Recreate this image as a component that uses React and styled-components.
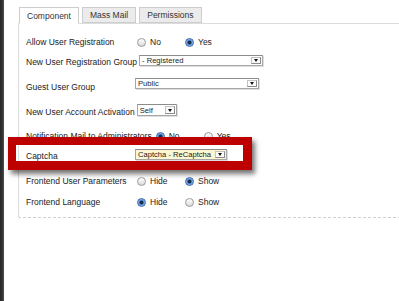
import React from 'react'
import styled, { createGlobalStyle } from 'styled-components'

const GlobalStyle = createGlobalStyle`
  html, body {
    margin: 0;
    padding: 0;
    background: #fff;
    overflow: hidden;
  }
  body {
    font-family: "Liberation Sans", Arial, sans-serif;
  }
`

const Page = styled.div`
  display: flex;
  width: 399px;
  height: 301px;
  overflow: hidden;
`

const SideStrip = styled.div`
  flex: 0 0 4px;
  background: linear-gradient(to right, #262626, #383838 70%, #555);
`

const Main = styled.div`
  flex: 1;
  min-width: 0;
  padding: 7px 0 0 14px;
  overflow: hidden;
`

const Tabs = styled.div`
  position: relative;
  z-index: 1;
  display: flex;
  align-items: flex-end;
  gap: 3px;
  height: 16px;
  padding-left: 1px;
`

const Tab = styled.div`
  box-sizing: border-box;
  display: flex;
  align-items: center;
  height: ${p => (p.$active ? '17px' : '16px')};
  margin-bottom: ${p => (p.$active ? '-1px' : '0')};
  padding: 0 7px;
  border: 1px solid #cdcdcd;
  border-bottom-color: ${p => (p.$active ? '#fff' : '#cdcdcd')};
  background: ${p => (p.$active ? '#fff' : '#ebebeb')};
  font-size: 8.5px;
  color: #333;
  white-space: nowrap;
`

const Panel = styled.div`
  width: 420px;
  padding: 11px 0 8px 7px;
  border-top: 1px solid #dcdcdc;
  border-left: 1px solid #dcdcdc;
  border-bottom: 1px dashed #d2d2d2;
`

const Row = styled.div`
  position: relative;
  display: flex;
  align-items: center;
  height: 14px;
  margin-top: ${p => p.$mt || 0}px;
  font-size: 8.5px;
  color: #222;
  white-space: nowrap;
`

const Label = styled.div`
  box-sizing: border-box;
  min-width: 109px;
  padding-right: 2px;
`

const Options = styled.div`
  display: flex;
  margin-left: 2px;
`

const Option = styled.div`
  display: flex;
  align-items: center;
  gap: 4px;
  width: 48px;
`

const Radio = styled.span`
  box-sizing: border-box;
  width: 9px;
  height: 9px;
  border-radius: 50%;
  border: 1px solid ${p => (p.$on ? '#3d67a3' : '#9a9a9a')};
  background: ${p =>
    p.$on
      ? 'radial-gradient(circle, #1b2c4a 0 1.5px, #4a8ad6 2.2px, #a8ccf4 4px)'
      : 'linear-gradient(#ffffff, #dadada)'};
`

const Select = styled.div`
  box-sizing: border-box;
  align-self: flex-start;
  display: flex;
  width: ${p => p.$w}px;
  height: ${p => p.$h || 11}px;
  margin-top: ${p => p.$dy || 0}px;
  border: 1px solid #a6a6a6;
  border-top-color: #8c8c8c;
  background: ${p => (p.$hl ? '#fcf5d2' : '#fff')};
  box-shadow: 1px 1px 0 #dedede;
  font-size: 7.6px;
  color: #1a1a1a;
`

const SelectText = styled.span`
  flex: 1;
  min-width: 0;
  padding-left: 2px;
  overflow: hidden;
  display: flex;
  align-items: center;
`

const Arrow = styled.span`
  flex: 0 0 8px;
  margin: 1px 1px 1px 0;
  border: 1px solid #c2c2c2;
  border-right-color: #8a8a8a;
  border-bottom-color: #8a8a8a;
  background: #fbfbfb;
  display: flex;
  align-items: center;
  justify-content: center;

  &::after {
    content: '';
    border-left: 2.5px solid transparent;
    border-right: 2.5px solid transparent;
    border-top: 3px solid #111;
  }
`

const Highlight = styled.div`
  position: absolute;
  left: -18px;
  top: -12px;
  width: 244px;
  height: 33px;
  box-sizing: border-box;
  border-style: solid;
  border-color: #bd0000;
  border-width: 8px 9px 9px 8px;
  box-shadow: 3px 4px 5px rgba(0, 0, 0, 0.55);
  pointer-events: none;
`

const RadioRow = ({ label, options, value, mt }) => (
  <Row $mt={mt}>
    <Label>{label}</Label>
    <Options>
      {options.map(o => (
        <Option key={o}>
          <Radio $on={o === value} />
          {o}
        </Option>
      ))}
    </Options>
  </Row>
)

const SelectRow = ({ label, text, w, h, dy, hl, mt, children }) => (
  <Row $mt={mt}>
    <Label>{label}</Label>
    <Select $w={w} $h={h} $dy={dy} $hl={hl}>
      <SelectText>{text}</SelectText>
      <Arrow />
    </Select>
    {children}
  </Row>
)

export default function App() {
  return (
    <>
      <GlobalStyle />
      <Page>
        <SideStrip />
        <Main>
          <Tabs>
            <Tab $active>Component</Tab>
            <Tab>Mass Mail</Tab>
            <Tab>Permissions</Tab>
          </Tabs>
          <Panel>
            <RadioRow label="Allow User Registration" options={['No', 'Yes']} value="Yes" />
            <SelectRow mt={6} label="New User Registration Group" text="- Registered" w={124} />
            <SelectRow mt={11} label="Guest User Group" text="Public" w={124} dy={-2} />
            <SelectRow mt={11} label="New User Account Activation" text="Self" w={40} h={12} dy={-1} />
            <RadioRow mt={10} label="Notification Mail to Administrators" options={['No', 'Yes']} value="No" />
            <SelectRow mt={6} label="Captcha" text="Captcha - ReCaptcha" w={92} hl>
              <Highlight />
            </SelectRow>
            <RadioRow mt={11} label="Frontend User Parameters" options={['Hide', 'Show']} value="Show" />
            <RadioRow mt={7} label="Frontend Language" options={['Hide', 'Show']} value="Hide" />
          </Panel>
        </Main>
      </Page>
    </>
  )
}
